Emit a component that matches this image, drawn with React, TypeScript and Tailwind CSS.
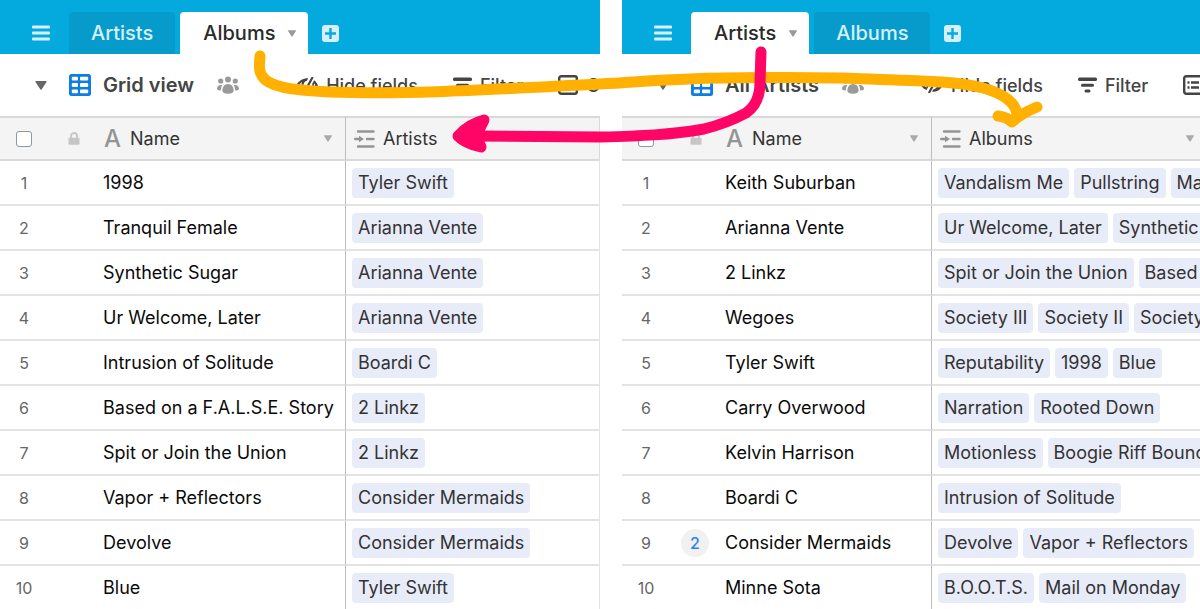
import React from 'react';

const albums = [
  { name: '1998', links: ['Tyler Swift'] },
  { name: 'Tranquil Female', links: ['Arianna Vente'] },
  { name: 'Synthetic Sugar', links: ['Arianna Vente'] },
  { name: 'Ur Welcome, Later', links: ['Arianna Vente'] },
  { name: 'Intrusion of Solitude', links: ['Boardi C'] },
  { name: 'Based on a F.A.L.S.E. Story', links: ['2 Linkz'] },
  { name: 'Spit or Join the Union', links: ['2 Linkz'] },
  { name: 'Vapor + Reflectors', links: ['Consider Mermaids'] },
  { name: 'Devolve', links: ['Consider Mermaids'] },
  { name: 'Blue', links: ['Tyler Swift'] },
];

const artists = [
  { name: 'Keith Suburban', links: ['Vandalism Me', 'Pullstring', 'Mail on Monday'] },
  { name: 'Arianna Vente', links: ['Ur Welcome, Later', 'Synthetic Sugar'] },
  { name: '2 Linkz', links: ['Spit or Join the Union', 'Based on a F.A.L.S.E. Story'] },
  { name: 'Wegoes', links: ['Society III', 'Society II', 'Society'] },
  { name: 'Tyler Swift', links: ['Reputability', '1998', 'Blue'] },
  { name: 'Carry Overwood', links: ['Narration', 'Rooted Down'] },
  { name: 'Kelvin Harrison', links: ['Motionless', 'Boogie Riff Bounce'] },
  { name: 'Boardi C', links: ['Intrusion of Solitude'] },
  { name: 'Consider Mermaids', comments: 2, links: ['Devolve', 'Vapor + Reflectors'] },
  { name: 'Minne Sota', links: ['B.O.O.T.S.', 'Mail on Monday'] },
];

type Row = { name: string; links: string[]; comments?: number };

function Caret({ className }: { className: string }) {
  return (
    <svg viewBox="0 0 10 8" className={className} fill="currentColor" aria-hidden="true">
      <path d="M.6 0h8.800c.5 0 .8.500.5.900L5.500 7.600a.6.6 0 0 1-1 0L.1.900C-.2.500.1 0 .6 0z" />
    </svg>
  );
}

function GridIcon() {
  return (
    <svg viewBox="0 0 22 22" className="w-[22px] h-[22px] shrink-0" aria-hidden="true">
      <rect width="22" height="22" rx="2.5" fill="#0d7fe2" />
      <g fill="#fff">
        <rect x="2.800" y="2.800" width="6.200" height="3.800" rx="1" />
        <rect x="11" y="2.800" width="8.200" height="3.800" rx="1" />
        <rect x="2.800" y="9.100" width="6.200" height="3.800" rx="1" />
        <rect x="11" y="9.100" width="8.200" height="3.800" rx="1" />
        <rect x="2.800" y="15.400" width="6.200" height="3.800" rx="1" />
        <rect x="11" y="15.400" width="8.200" height="3.800" rx="1" />
      </g>
    </svg>
  );
}

function PeopleIcon() {
  return (
    <svg viewBox="0 0 22 18" className="w-[22px] h-[18px] shrink-0" fill="#9a9a9a" aria-hidden="true">
      <circle cx="11" cy="3.500" r="3" />
      <circle cx="3.700" cy="5" r="2.600" />
      <circle cx="18.300" cy="5" r="2.600" />
      <path d="M11 8c3.300 0 5.600 2.800 5.600 6.400 0 2.400-2 3.300-5.600 3.300s-5.600-.9-5.600-3.300C5.400 10.800 7.700 8 11 8z" />
      <path d="M4 9c.5 0 .9.1 1.300.3-1 1.500-1.500 3.300-1.400 5.100C1.600 14.500 0 14.200 0 12.600 0 10.500 1.800 9 4 9z" />
      <path d="M18 9c-.5 0-.9.1-1.300.3 1 1.500 1.500 3.300 1.400 5.100 2.300.1 3.900-.2 3.900-1.800C22 10.500 20.200 9 18 9z" />
    </svg>
  );
}

function HideIcon() {
  return (
    <svg viewBox="0 0 22 16" className="w-[22px] h-[16px] shrink-0" fill="#444" aria-hidden="true">
      <path d="M.2 8.400C2.700 3.900 6.800 1.300 12.200 1.300L11 3.700C8.300 4.300 7 6.500 7.600 9.300L5.500 13C3.200 12 1.400 10.500.2 8.400z" />
      <path d="M3 8.300C3.800 6.700 4.800 5.600 6 4.800 5.300 6.700 5.300 8.700 5.800 10.500 4.700 10 3.700 9.200 3 8.300z" fill="#fff" />
      <path d="M16.300.8 8.300 15.200" stroke="#444" strokeWidth="2.200" strokeLinecap="round" />
      <path d="M18.200 3.300C19.800 4.600 21 6.200 21.900 8.200 19.700 12.600 16 14.900 11 14.800L12.500 12.300C15.300 11.500 17 9.500 16.200 6.700z" />
      <path d="M18 6.200c.6.6 1 1.200 1.400 1.900-.8 1.400-1.800 2.500-3 3.200 1.200-1.500 1.700-3.200 1.600-5.100z" fill="#fff" />
    </svg>
  );
}

function FilterIcon() {
  return (
    <svg viewBox="0 0 19 16" className="w-[19px] h-[16px] shrink-0" fill="#444" aria-hidden="true">
      <rect y=".5" width="19" height="3.600" rx="1.500" />
      <rect x="3" y="6.800" width="13" height="3" rx="1.500" />
      <rect x="6.500" y="12.500" width="6" height="3" rx="1.500" />
    </svg>
  );
}

function GroupIcon() {
  return (
    <svg viewBox="0 0 20 20" className="w-[20px] h-[20px] shrink-0" fill="none" stroke="#444" strokeWidth="2.400" aria-hidden="true">
      <rect x="1.200" y="1.200" width="17.600" height="17.600" rx="2" />
      <path d="M4.500 7.500h2M8 7.500h8M4.500 12.500h2M8 12.500h8" />
    </svg>
  );
}

function LinkIcon() {
  return (
    <svg viewBox="0 0 21 18" className="w-[21px] h-[18px] shrink-0" stroke="#949494" strokeWidth="2.400" strokeLinecap="round" aria-hidden="true">
      <path d="M4 1.500h15.500M13 9h6.500M4 16.500h15.500M1.200 9h5" />
      <path d="M5 5.800 10 9l-5 3.200z" fill="#949494" stroke="none" />
    </svg>
  );
}

function LockIcon() {
  return (
    <svg viewBox="0 0 12 13" className="w-[12px] h-[13px] shrink-0" aria-hidden="true">
      <path d="M3 6.500V4a3 3 0 0 1 6 0v2.500" fill="none" stroke="#c6c6c6" strokeWidth="1.800" />
      <rect x=".5" y="5.800" width="11" height="7" rx="1" fill="#c6c6c6" />
    </svg>
  );
}

function TableTab({ label, active }: { label: string; active: boolean }) {
  if (active) {
    return (
      <button className="flex items-center h-[42px] pl-[23px] pr-3 gap-[13px] rounded-t bg-white text-[#2a2a2a] text-[20px] font-medium">
        {label}
        <Caret className="w-2 h-[7px] text-[#999]" />
      </button>
    );
  }
  return (
    <button className="h-[42px] px-[22px] rounded-t bg-[#079bcb] text-[#d5f0fa] text-[20px] font-medium">
      {label}
    </button>
  );
}

function Panel({ active, view, linkField, rows, nameCol, linkEdge, className }: {
  active: string;
  view: string;
  linkField: string;
  rows: Row[];
  nameCol: string;
  linkEdge: string;
  className: string;
}) {
  return (
    <section className={`min-w-0 overflow-hidden ${className}`}>
      <nav className="flex items-end h-[54px] bg-[#04aade] overflow-hidden">
        <button className="h-[42px] pl-8 pr-[19px]" aria-label="Tables">
          <svg viewBox="0 0 18 16" className="w-[18px] h-[16px]" fill="#d5f0fa" aria-hidden="true">
            <rect y=".5" width="18" height="3" rx="1" />
            <rect y="6.500" width="18" height="3" rx="1" />
            <rect y="12.500" width="18" height="3" rx="1" />
          </svg>
        </button>
        <div className="flex gap-[5px]">
          <TableTab label="Artists" active={active === 'Artists'} />
          <TableTab label="Albums" active={active === 'Albums'} />
        </div>
        <button className="h-[42px] px-[14px]" aria-label="Add table">
          <svg viewBox="0 0 17 17" className="w-[17px] h-[17px]" aria-hidden="true">
            <rect width="17" height="17" rx="3" fill="#d5f0fa" />
            <path d="M8.500 3v11M3 8.500h11" stroke="#04aade" strokeWidth="2.400" />
          </svg>
        </button>
      </nav>

      <div className="flex items-center h-[62px] pl-[35px] whitespace-nowrap overflow-hidden text-[#444]">
        <Caret className="w-[12px] h-[9px] shrink-0 text-[#666]" />
        <button className="flex items-center gap-3 ml-[22px] text-[20px] font-semibold">
          <GridIcon />
          {view}
        </button>
        <button className="ml-[23px]" aria-label="Collaborators">
          <PeopleIcon />
        </button>
        <div className="flex gap-[35px] ml-[57px] text-[18px] font-medium">
          <button className="flex items-center gap-2"><HideIcon />Hide fields</button>
          <button className="flex items-center gap-2"><FilterIcon />Filter</button>
          <button className="flex items-center gap-2"><GroupIcon />Group</button>
        </div>
      </div>

      <table className="w-full table-fixed border-separate border-spacing-0 text-[18px]">
        <colgroup>
          <col className="w-[48px]" />
          <col className="w-[55px]" />
          <col className={nameCol} />
          <col />
        </colgroup>
        <thead>
          <tr className="h-[45px] bg-[#f4f4f4] text-left text-[#333]">
            <th className="border-y-2 border-[#d9d9d9] p-0 pl-4">
              <input type="checkbox" aria-label="Select all records" className="block appearance-none w-4 h-4 rounded-[3px] border border-[#8d979f] bg-white" />
            </th>
            <th className="border-y-2 border-[#d9d9d9] p-0 pl-5">
              <LockIcon />
            </th>
            <th className="border-y-2 border-r border-[#d9d9d9] border-r-[#bdbdbd] p-0 font-normal">
              <div className="flex items-center pl-px pr-[13px]">
                <span className="w-[26px] text-[24px] leading-6 font-medium text-[#949494]">A</span>
                Name
                <Caret className="w-2 h-[7px] ml-auto text-[#aaa]" />
              </div>
            </th>
            <th className={`border-y-2 border-[#d9d9d9] p-0 font-normal ${linkEdge}`}>
              <div className="flex items-center gap-2 pl-2 pr-[6px]">
                <LinkIcon />
                {linkField}
                {linkField === 'Albums' && <Caret className="w-2 h-[7px] ml-auto text-[#aaa]" />}
              </div>
            </th>
          </tr>
        </thead>
        <tbody>
          {rows.map((row, i) => (
            <tr key={row.name} className="h-[45px]">
              <td className="border-b-2 border-[#e3e3e3] p-0 text-center text-[16px] text-[#666]">{i + 1}</td>
              <td className="border-b-2 border-[#e3e3e3] p-0 pl-[11px]">
                {row.comments && (
                  <span className="flex items-center justify-center w-7 h-7 rounded-full bg-[#f1f1f1] text-[16px] font-medium text-[#2d7ff9]">
                    {row.comments}
                  </span>
                )}
              </td>
              <td className="border-b-2 border-r border-[#e3e3e3] border-r-[#bdbdbd] p-0 whitespace-nowrap text-[#0a0a0a]">{row.name}</td>
              <td className={`border-b-2 border-[#e3e3e3] p-0 pl-[6px] ${linkEdge}`}>
                <div className="flex gap-[5px] overflow-hidden">
                  {row.links.map((link) => (
                    <span key={link} className="shrink-0 h-[30px] px-[6px] rounded bg-[#e8ecf8] leading-[30px] whitespace-nowrap text-[#333]">
                      {link}
                    </span>
                  ))}
                </div>
              </td>
            </tr>
          ))}
        </tbody>
      </table>
    </section>
  );
}

function App() {
  return (
    <main className="relative h-screen overflow-hidden bg-white font-['Inter',sans-serif]">
      <div className="grid grid-cols-2">
        <Panel
          active="Albums"
          view="Grid view"
          linkField="Artists"
          rows={albums}
          nameCol="w-[243px]"
          linkEdge="border-r"
          className=""
        />
        <Panel
          active="Artists"
          view="All Artists"
          linkField="Albums"
          rows={artists}
          nameCol="w-[207px]"
          linkEdge=""
          className="ml-[22px]"
        />
      </div>

      {/* hand-drawn arrows from each tab to its linked field */}
      <svg className="absolute top-0 left-0 w-[1200px] h-[609px] pointer-events-none" viewBox="0 0 1200 609" fill="none" strokeWidth="11" strokeLinecap="round" strokeLinejoin="round" aria-hidden="true">
        <g stroke="#ffb000">
          <path d="M260 56C259 67 259 71 262 76C269 87 290 90 330 92C410 95 500 89 600 84C630 83 650 80 690 79C740 77 830 77 880 79.500C930 81 960 82 983 88C1005 94 1017 104 1017 116" />
          <path d="M998 116Q1007 117 1012 122Q1022 113 1037 107" />
        </g>
        <g stroke="#ff0566">
          <path d="M761 52L760 82C760 96 755 107 746 113C733 120 716 126 704 129C670 135 640 136 600 137C560 137 520 136 475 136" />
          <path d="M484 120C472 123 464 129 458 136C464 142 472 145 481 147L476 136Z" fill="#ff0566" />
        </g>
      </svg>
    </main>
  );
}

export default App;
